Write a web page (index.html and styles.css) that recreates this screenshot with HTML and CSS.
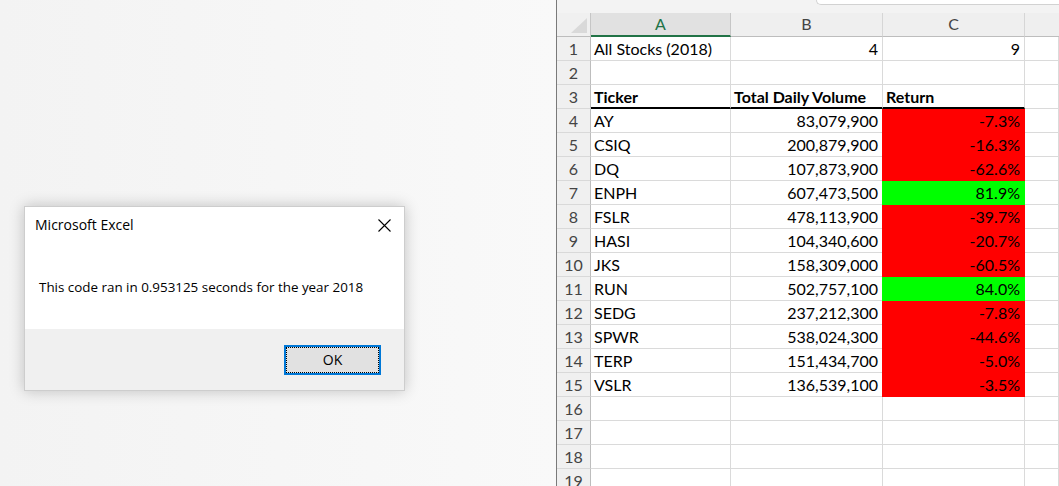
FILE: index.html
```html
<!DOCTYPE html>
<html lang="en">
<head>
<meta charset="utf-8">
<title>Excel</title>
<link rel="stylesheet" href="styles.css">
</head>
<body>
<div class="screen">
  <div class="desktop">
    <div class="dialog">
      <div class="dlg-body">
        <div class="dlg-titlebar">
          <span class="dlg-title">Microsoft Excel</span>
          <svg class="dlg-close" width="13" height="13" viewBox="0 0 13 13"><path d="M0.5 0.5 L12.5 12.5 M12.5 0.5 L0.5 12.5" stroke="#000" stroke-width="1.1" fill="none"/></svg>
        </div>
        <p class="dlg-msg">This code ran in 0.953125 seconds for the year 2018</p>
      </div>
      <div class="dlg-footer">
        <button class="ok"><span class="ok-focus">OK</span></button>
      </div>
    </div>
  </div>
  <div class="excel">
    <div class="topstrip"><div class="formula"></div></div>
    <div class="sheet">
      <div class="corner"><svg width="17" height="16" viewBox="0 0 17 16"><polygon points="16,0 16,15 0,15" fill="#d9d9d9"/></svg></div>
      <div class="ch sel">A</div><div class="ch">B</div><div class="ch">C</div><div class="ch last"></div>

      <div class="rh">1</div><div class="c">All Stocks (2018)</div><div class="c r">4</div><div class="c r">9</div><div class="c"></div>
      <div class="rh">2</div><div class="c"></div><div class="c"></div><div class="c"></div><div class="c"></div>
      <div class="rh">3</div><div class="c b hd">Ticker</div><div class="c b hd">Total Daily Volume</div><div class="c b hd">Return</div><div class="c"></div>
      <div class="rh">4</div><div class="c">AY</div><div class="c r">83,079,900</div><div class="c r red">-7.3%</div><div class="c"></div>
      <div class="rh">5</div><div class="c">CSIQ</div><div class="c r">200,879,900</div><div class="c r red">-16.3%</div><div class="c"></div>
      <div class="rh">6</div><div class="c">DQ</div><div class="c r">107,873,900</div><div class="c r red">-62.6%</div><div class="c"></div>
      <div class="rh">7</div><div class="c">ENPH</div><div class="c r">607,473,500</div><div class="c r green">81.9%</div><div class="c"></div>
      <div class="rh">8</div><div class="c">FSLR</div><div class="c r">478,113,900</div><div class="c r red">-39.7%</div><div class="c"></div>
      <div class="rh">9</div><div class="c">HASI</div><div class="c r">104,340,600</div><div class="c r red">-20.7%</div><div class="c"></div>
      <div class="rh">10</div><div class="c">JKS</div><div class="c r">158,309,000</div><div class="c r red">-60.5%</div><div class="c"></div>
      <div class="rh">11</div><div class="c">RUN</div><div class="c r">502,757,100</div><div class="c r green">84.0%</div><div class="c"></div>
      <div class="rh">12</div><div class="c">SEDG</div><div class="c r">237,212,300</div><div class="c r red">-7.8%</div><div class="c"></div>
      <div class="rh">13</div><div class="c">SPWR</div><div class="c r">538,024,300</div><div class="c r red">-44.6%</div><div class="c"></div>
      <div class="rh">14</div><div class="c">TERP</div><div class="c r">151,434,700</div><div class="c r red">-5.0%</div><div class="c"></div>
      <div class="rh">15</div><div class="c">VSLR</div><div class="c r">136,539,100</div><div class="c r red">-3.5%</div><div class="c"></div>
      <div class="rh">16</div><div class="c"></div><div class="c"></div><div class="c"></div><div class="c"></div>
      <div class="rh">17</div><div class="c"></div><div class="c"></div><div class="c"></div><div class="c"></div>
      <div class="rh">18</div><div class="c"></div><div class="c"></div><div class="c"></div><div class="c"></div>
      <div class="rh">19</div><div class="c"></div><div class="c"></div><div class="c"></div><div class="c"></div>
    </div>
  </div>
</div>
</body>
</html>
```
FILE: styles.css
```css
html, body {
  margin: 0;
  padding: 0;
  background: #ffffff;
}

.screen {
  display: flex;
  width: 1059px;
  height: 486px;
  overflow: hidden;
}

.desktop {
  flex: none;
  width: 556px;
  height: 486px;
  border-right: 1px solid #7a7a7a;
  position: relative;
  background: linear-gradient(90deg, #f3f3f3 0%, #f6f6f6 50%, #f9f9f9 100%);
}

/* ---------- dialog ---------- */
.dialog {
  position: absolute;
  left: 24px;
  top: 206px;
  width: 381px;
  height: 185px;
  box-sizing: border-box;
  border: 1px solid #cdcdcd;
  box-shadow: 0 0 14px rgba(0, 0, 0, 0.22);
  background: #ffffff;
  display: flex;
  flex-direction: column;
  font-family: "Open Sans", "Noto Sans", sans-serif;
  color: #000;
}

.dlg-body {
  height: 122px;
  flex: none;
  background: #ffffff;
}

.dlg-titlebar {
  display: flex;
  justify-content: space-between;
  align-items: flex-start;
  padding: 8px 13px 0 10px;
  height: 20px;
}

.dlg-title {
  font-size: 14px;
  line-height: 20px;
}

.dlg-close {
  display: block;
  margin-top: 4px;
}

.dlg-msg {
  margin: 43px 0 0 14px;
  font-size: 13.4px;
  line-height: 18px;
}

.dlg-footer {
  flex: 1;
  background: #f0f0f0;
  display: flex;
  justify-content: flex-end;
  align-items: flex-start;
  padding: 16px 23px 0 0;
}

.ok {
  width: 97px;
  height: 30px;
  box-sizing: border-box;
  border: 2px solid #0078d7;
  background: #e1e1e1;
  padding: 0;
  margin: 0;
  display: flex;
  font-family: "Open Sans", "Noto Sans", sans-serif;
  font-size: 14px;
  color: #000;
}

.ok-focus {
  flex: 1;
  border: 1px dotted #000;
  display: flex;
  align-items: center;
  justify-content: center;
  line-height: 18px;
}

/* ---------- excel ---------- */
.excel {
  flex: 1;
  display: flex;
  flex-direction: column;
  background: #ffffff;
  min-width: 0;
}

.topstrip {
  height: 13px;
  flex: none;
  background: #f3f3f3;
}

.formula {
  margin-left: 259px;
  height: 4px;
  background: #ffffff;
  border-left: 1px solid #d2d2d2;
  border-bottom: 1px solid #d2d2d2;
  border-bottom-left-radius: 5px;
}

.sheet {
  display: grid;
  grid-template-columns: 34px 140px 152px 142px 1fr;
  grid-auto-rows: 24px;
  font-family: Lato, "Open Sans", sans-serif;
  font-size: 16px;
  color: #000;
}

.sheet > div {
  box-sizing: border-box;
  white-space: nowrap;
  overflow: hidden;
}

.corner {
  background: #f0f0f0;
  border-right: 1px solid #c6c6c6;
  border-bottom: 1px solid #bdbdbd;
  display: flex;
  justify-content: flex-end;
  align-items: flex-end;
  padding: 0 2px 2px 0;
}

.corner svg {
  display: block;
}

.ch {
  background: #efefef;
  border-right: 1px solid #d6d6d6;
  border-bottom: 1px solid #bdbdbd;
  text-align: center;
  color: #444444;
  line-height: 22px;
}

.ch.sel {
  background: #e1e1e1;
  color: #217346;
  border-bottom: 2px solid #217346;
  border-right-color: #c6c6c6;
}

.ch.last {
  border-right: none;
}

.rh {
  background: #f0f0f0;
  border-right: 1px solid #bdbdbd;
  border-bottom: 1px solid #d9d9d9;
  text-align: center;
  color: #444444;
  line-height: 22px;
  padding-top: 1px;
}

.c {
  border-right: 1px solid #dadada;
  border-bottom: 1px solid #dadada;
  line-height: 22px;
  padding: 1px 3px 0 3px;
}

.c.r {
  text-align: right;
  padding-right: 4px;
}

.c.b {
  font-weight: 700;
}

.c.hd {
  border-bottom: 2px solid #000000;
}

.c.red,
.c.green {
  margin-left: -1px;
  border-right-color: transparent;
  border-bottom-color: transparent;
  padding-right: 4px;
}

.c.red {
  background: #ff0000;
}

.c.green {
  background: #00ff00;
}
```
